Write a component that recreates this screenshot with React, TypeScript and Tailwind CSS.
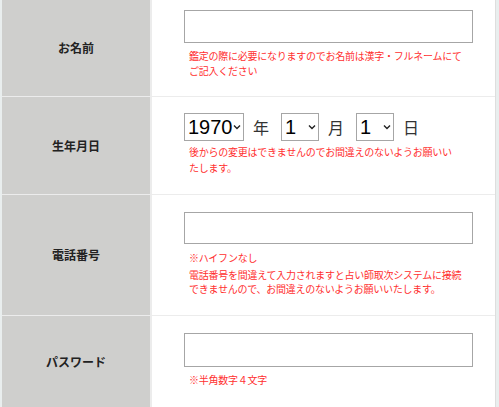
import React from 'react';

const jp = "font-['Noto_Sans_CJK_JP','Noto_Sans',sans-serif]";

function Chevron() {
  return (
    <svg
      className="pointer-events-none absolute right-[3px] top-1/2 -translate-y-1/2"
      width="8"
      height="6"
      viewBox="0 0 8 6"
    >
      <path d="M1 1.5 L4 4.5 L7 1.5" fill="none" stroke="#222" strokeWidth="1.4" />
    </svg>
  );
}

function Select({ value, options, width }: { value: string; options: string[]; width: string }) {
  return (
    <div className={`relative h-[28px] ${width}`}>
      <select
        defaultValue={value}
        className="h-full w-full appearance-none rounded-none border border-[#a6a6a6] bg-white pl-[3px] pr-[10px] font-['Liberation_Sans',Arial,sans-serif] text-[20px] leading-none text-black outline-none"
      >
        {options.map((o) => (
          <option key={o} value={o}>
            {o}
          </option>
        ))}
      </select>
      <Chevron />
    </div>
  );
}

function Note({ children, className = '' }: { children: React.ReactNode; className?: string }) {
  return (
    <p className={`ml-[5px] text-[10px] tracking-[-0.25px] text-[#ff2f2f] ${jp} ${className}`}>
      {children}
    </p>
  );
}

function Row({
  label,
  height,
  children,
}: {
  label: string;
  height: string;
  children: React.ReactNode;
}) {
  return (
    <div className={`flex ${height}`}>
      <div className="flex w-[148px] items-center justify-center bg-[#cfcfcd]">
        <span className={`text-[12px] font-bold text-[#222] ${jp}`}>{label}</span>
      </div>
      <div className="ml-[2px] flex-1 bg-white pl-[32px]">{children}</div>
    </div>
  );
}

const TextInput = ({ h }: { h: string }) => (
  <input
    type="text"
    className={`block w-[289px] ${h} border border-[#a6a6a6] bg-white outline-none`}
  />
);

export default function App() {
  const years = Array.from({ length: 60 }, (_, i) => String(1940 + i));
  const months = Array.from({ length: 12 }, (_, i) => String(i + 1));
  const days = Array.from({ length: 31 }, (_, i) => String(i + 1));

  return (
    <div className="min-h-screen bg-[#e9eeee] pl-[2px] pr-[3px]">
      <div className="flex flex-col gap-[1px] border-r border-[#dedede] bg-[#ececec]">
        <Row label="お名前" height="h-[96px]">
          <div className="pt-[10px]">
            <TextInput h="h-[33px]" />
            <Note className="mt-[5px] leading-[15px]">
              鑑定の際に必要になりますのでお名前は漢字・フルネームにて
              <br />
              ご記入ください
            </Note>
          </div>
        </Row>

        <Row label="生年月日" height="h-[97px]">
          <div className="pt-[16px]">
            <div className={`flex items-center text-[16px] text-[#333] ${jp}`}>
              <Select value="1970" options={years} width="w-[60px]" />
              <span className="ml-[9px] mr-[12px]">年</span>
              <Select value="1" options={months} width="w-[38px]" />
              <span className="ml-[9px] mr-[12px]">月</span>
              <Select value="1" options={days} width="w-[38px]" />
              <span className="ml-[9px]">日</span>
            </div>
            <Note className="mt-[3px] leading-[16px]">
              後からの変更はできませんのでお間違えのないようお願いい
              <br />
              たします。
            </Note>
          </div>
        </Row>

        <Row label="電話番号" height="h-[120px]">
          <div className="pt-[17px]">
            <TextInput h="h-[32px]" />
            <Note className="mt-[6px] leading-[15px]">※ハイフンなし</Note>
            <Note className="mt-[3px] leading-[14px]">
              電話番号を間違えて入力されますと占い師取次システムに接続
              <br />
              できませんので、お間違えのないようお願いいたします。
            </Note>
          </div>
        </Row>

        <Row label="パスワード" height="h-[92px]">
          <div className="pt-[17px]">
            <TextInput h="h-[34px]" />
            <Note className="mt-[5px] leading-[15px]">※半角数字４文字</Note>
          </div>
        </Row>
      </div>
    </div>
  );
}
